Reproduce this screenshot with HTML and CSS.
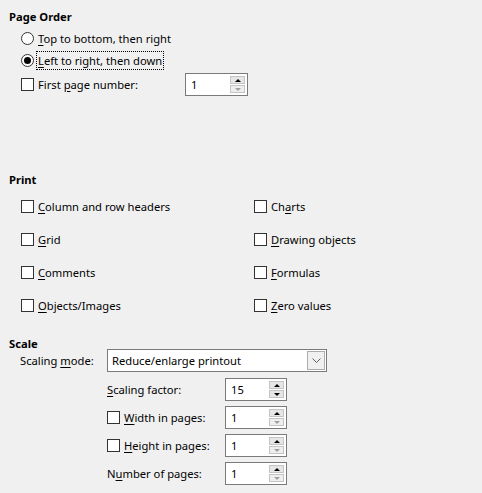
FILE: index.html
```html
<!DOCTYPE html>
<html>
<head>
<meta charset="utf-8">
<link rel="stylesheet" href="styles.css">
</head>
<body>
<div class="page">
  <section class="order">
    <div class="head">Page Order</div>
    <div class="row r22"><span class="radio"></span><span class="lbl"><u>T</u>op to bottom, then right</span></div>
    <div class="row r22"><span class="radio on"></span><span class="lbl focus"><u>L</u>eft to right, then down</span></div>
    <div class="row r23 first">
      <div class="fp"><span class="check"></span><span class="lbl">First <u>p</u>age number:</span></div>
      <div class="spin w63"><span class="val">1</span><span class="btns"><span class="b up"></span><span class="b dn dis"></span></span></div>
    </div>
  </section>

  <section class="print">
    <div class="head">Print</div>
    <div class="grid">
      <div class="row r22"><span class="check"></span><span class="lbl"><u>C</u>olumn and row headers</span></div>
      <div class="row r22"><span class="check"></span><span class="lbl">Ch<u>a</u>rts</span></div>
      <div class="row r22"><span class="check"></span><span class="lbl"><u>G</u>rid</span></div>
      <div class="row r22"><span class="check"></span><span class="lbl"><u>D</u>rawing objects</span></div>
      <div class="row r22"><span class="check"></span><span class="lbl"><u>C</u>omments</span></div>
      <div class="row r22"><span class="check"></span><span class="lbl"><u>F</u>ormulas</span></div>
      <div class="row r22"><span class="check"></span><span class="lbl"><u>O</u>bjects/Images</span></div>
      <div class="row r22"><span class="check"></span><span class="lbl"><u>Z</u>ero values</span></div>
    </div>
  </section>

  <section class="scale">
    <div class="head">Scale</div>
    <div class="row r23 mode">
      <span class="mlbl">Scaling <u>m</u>ode:</span>
      <div class="combo"><span class="val">Reduce/enlarge printout</span><span class="cbtn"><svg width="9" height="6" viewBox="0 0 9 6"><polyline points="0.5,0.5 4.5,4.5 8.5,0.5" fill="none" stroke="#606060" stroke-width="1"/></svg></span></div>
    </div>
    <div class="srows">
      <div class="row r23 srow"><span class="slbl"><u>S</u>caling factor:</span><div class="spin w62"><span class="val">15</span><span class="btns"><span class="b up"></span><span class="b dn"></span></span></div></div>
      <div class="row r23 srow"><span class="slbl"><span class="check"></span><span class="lbl"><u>W</u>idth in pages:</span></span><div class="spin w62"><span class="val">1</span><span class="btns"><span class="b up"></span><span class="b dn dis"></span></span></div></div>
      <div class="row r23 srow"><span class="slbl"><span class="check"></span><span class="lbl"><u>H</u>eight in pages:</span></span><div class="spin w62"><span class="val">1</span><span class="btns"><span class="b up"></span><span class="b dn dis"></span></span></div></div>
      <div class="row r23 srow"><span class="slbl">N<u>u</u>mber of pages:</span><div class="spin w62"><span class="val">1</span><span class="btns"><span class="b up"></span><span class="b dn dis"></span></span></div></div>
    </div>
  </section>
</div>
</body>
</html>
```

FILE: styles.css
```css
* { box-sizing: border-box; }
html, body { margin: 0; padding: 0; }
body {
  background: #f0f0f0;
  width: 482px;
  height: 493px;
  overflow: hidden;
  font-family: "Noto Sans", "Open Sans", sans-serif;
  font-size: 11.2px;
  color: #000;
}
u { text-decoration: underline; text-underline-offset: 2px; }
.head {
  font-weight: bold;
  line-height: 16px;
  height: 16px;
  padding-left: 9px;
}
.row { display: flex; align-items: center; }
.r22 { height: 22px; }
.r23 { height: 23px; }

.order { padding-top: 9px; }
.order > .head { margin-bottom: 2px; }
.order .row { padding-left: 21px; }
.order .first { margin-top: 2px; }
.fp { display: flex; align-items: center; width: 164px; }

.radio {
  width: 13px; height: 13px;
  border: 1px solid #333;
  border-radius: 50%;
  background: #fff;
  display: inline-flex; align-items: center; justify-content: center;
  flex: none;
}
.radio.on::after {
  content: "";
  width: 7px; height: 7px;
  border-radius: 50%;
  background: #000;
}
.check {
  width: 13px; height: 13px;
  border: 1px solid #333;
  background: #fff;
  flex: none;
}
.lbl { margin-left: 4px; line-height: 15px; white-space: nowrap; }
.focus { outline: 1px dotted #000; outline-offset: 1px; margin-left: 4px; }

.print { margin-top: 76px; }
.print .grid {
  display: grid;
  grid-template-columns: 233px auto;
  row-gap: 11px;
  padding-left: 21px;
  margin-top: 7px;
}

.scale { margin-top: 20px; }
.scale .mode { margin-top: -3px; padding-left: 20px; }
.mlbl { width: 87px; white-space: nowrap; }
.combo {
  width: 220px; height: 23px;
  border: 1px solid #7a7a7a;
  background: #fff;
  display: flex; align-items: center;
  padding: 1px;
}
.combo .val { flex: 1; padding-left: 3px; }
.cbtn {
  width: 18px; height: 19px;
  border: 1px solid #adadad;
  background: #f0f0f0;
  display: flex; align-items: center; justify-content: center;
}
.srows { padding-left: 107px; margin-top: 6px; display: flex; flex-direction: column; gap: 5px; }
.slbl { width: 118px; display: flex; align-items: center; white-space: nowrap; }

.spin {
  height: 23px;
  border: 1px solid #7a7a7a;
  background: #fff;
  display: flex;
  padding: 1px;
}
.w63 { width: 63px; }
.w62 { width: 62px; }
.spin .val { flex: 1; padding-left: 4px; line-height: 19px; }
.btns {
  width: 16px;
  display: flex; flex-direction: column;
  gap: 1px;
  padding: 1px 1px 1px 0;
}
.b {
  flex: 1;
  background: #e6e6e6;
  border: 1px solid #c4c4c4;
  display: flex; align-items: center; justify-content: center;
}
.b::after {
  content: "";
  width: 0; height: 0;
  border-left: 3px solid transparent;
  border-right: 3px solid transparent;
}
.up::after { border-bottom: 3px solid #000; }
.dn::after { border-top: 3px solid #000; }
.dn.dis::after { border-top-color: #a0a0a0; }
.dn.dis { background: #eeeeee; }
```
